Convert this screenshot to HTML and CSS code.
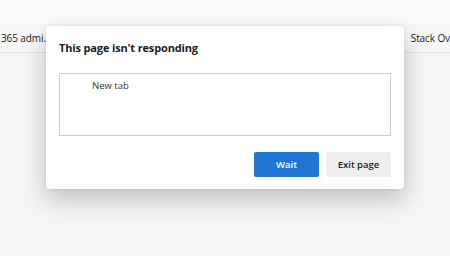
FILE: index.html
```html
<!DOCTYPE html>
<html lang="en">
<head>
    <meta charset="UTF-8">
    <title>This page isn't responding</title>
    <link rel="stylesheet" href="styles.css">
</head>
<body>
    <div class="top-strip"></div>
    <div class="fav-bar">
        <span class="fav-item fav-first">365 admi...</span>
        <span class="fav-item fav-last"><i class="fav-dot"></i>Stack Ov</span>
    </div>
    <div class="page"></div>

    <div class="dialog">
        <h1 class="dialog-title">This page isn't responding</h1>
        <div class="tab-list">
            <p class="tab-entry">New tab</p>
        </div>
        <div class="dialog-actions">
            <button class="btn btn-primary">Wait</button>
            <button class="btn btn-secondary">Exit page</button>
        </div>
    </div>
</body>
</html>
```

FILE: styles.css
```css
:root {
    --bg-top: #fbfbfb;
    --bg-bar: #f7f7f7;
    --bg-page: #f5f5f5;
    --line: #e2e2e2;
    --text: #1b1b1b;
    --accent: #1f76d3;
    --font: 'Open Sans', 'Noto Sans', sans-serif;
}

* { margin: 0; padding: 0; box-sizing: border-box; }

body {
    font-family: var(--font);
    background-color: var(--bg-page);
    color: var(--text);
    width: 450px; height: 256px;
    overflow: hidden;
    position: relative;
}

.top-strip { height: 24px; background-color: var(--bg-top); }

.fav-bar {
    height: 29px;
    background-color: var(--bg-bar);
    border-bottom: 1px solid var(--line);
    display: flex; align-items: center;
    font-size: 10px;
    white-space: nowrap;
    overflow: hidden;
}

.fav-first { padding-left: 1px; letter-spacing: -0.1px; }
.fav-last {
    margin-left: auto;
    display: flex; align-items: center;
    letter-spacing: -0.1px;
}
.fav-dot {
    width: 2px; height: 2px; border-radius: 50%;
    background: #f0a060; margin-right: 8px;
}

.dialog {
    position: absolute; left: 46px; top: 26px;
    width: 358px; height: 163px;
    background: #fff;
    border-radius: 4px;
    box-shadow: 0 10px 24px rgba(0, 0, 0, 0.22), 0 0 4px rgba(0, 0, 0, 0.08);
    padding: 13px 13px 12px 13px;
    display: flex; flex-direction: column;
}

.dialog-title {
    font-size: 11px; font-weight: 700;
    line-height: 15px;
    margin-top: 1px;
    letter-spacing: -0.15px;
}

.tab-list {
    margin-top: 18px;
    height: 63px;
    border: 1px solid #cdcdcd;
    padding: 5px 0 0 32px;
}

.tab-entry { font-size: 9.5px; line-height: 13px; color: #333; }

.dialog-actions {
    margin-top: auto;
    display: flex; justify-content: flex-end; gap: 7px;
}

.btn {
    width: 65px; height: 25px;
    border: none; border-radius: 2px;
    font-family: var(--font);
    font-size: 9.5px; font-weight: 600;
}

.btn-primary { background-color: var(--accent); color: #fff; }
.btn-secondary { background-color: #efefef; color: var(--text); }
```
